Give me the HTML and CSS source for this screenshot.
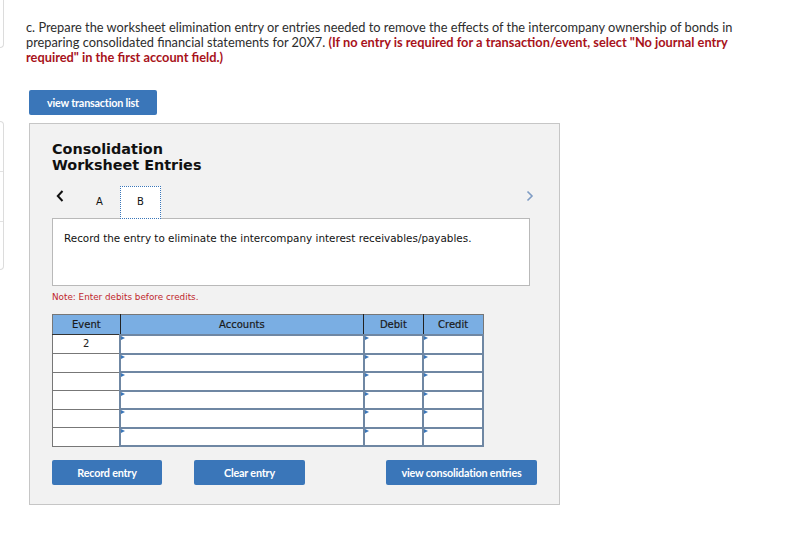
FILE: index.html
```html
<!DOCTYPE html>
<html>
<head>
<meta charset="utf-8">
<link rel="stylesheet" href="styles.css">
</head>
<body>
<div class="page">
  <aside class="side">
    <div class="side-box side-top"></div>
    <div class="side-box side-list">
      <div class="side-item"></div>
      <div class="side-item"></div>
      <div class="side-item"></div>
    </div>
  </aside>
  <main class="main">
    <p class="question">c. Prepare the worksheet elimination entry or entries needed to remove the effects of the intercompany ownership of bonds in<br>preparing consolidated financial statements for 20X7. <strong class="warn">(If no entry is required for a transaction/event, select "No journal entry<br>required" in the first account field.)</strong></p>
    <button class="btn btn-list">view transaction list</button>
    <section class="panel">
      <h2 class="panel-title">Consolidation<br>Worksheet Entries</h2>
      <div class="tabs">
        <span class="arrow arrow-left">
          <svg width="8" height="12" viewBox="0 0 8 12"><path d="M6.5 1 L1.8 6 L6.5 11" fill="none" stroke="#111" stroke-width="2"/></svg>
        </span>
        <span class="tab">A</span>
        <span class="tab tab-active">B</span>
        <span class="arrow arrow-right">
          <svg width="8" height="12" viewBox="0 0 8 12"><path d="M1.5 1.5 L6 6 L1.5 10.5" fill="none" stroke="#7f9cc4" stroke-width="1.6"/></svg>
        </span>
      </div>
      <div class="instruction">Record the entry to eliminate the intercompany interest receivables/payables.</div>
      <p class="note">Note: Enter debits before credits.</p>
      <table class="grid">
        <thead>
          <tr>
            <th class="c-event">Event</th>
            <th class="c-acct">Accounts</th>
            <th class="c-num">Debit</th>
            <th class="c-num">Credit</th>
          </tr>
        </thead>
        <tbody>
          <tr><td class="ev">2</td><td class="in"><div class="field"></div></td><td class="in"><div class="field"></div></td><td class="in"><div class="field"></div></td></tr>
          <tr><td class="ev"></td><td class="in"><div class="field"></div></td><td class="in"><div class="field"></div></td><td class="in"><div class="field"></div></td></tr>
          <tr><td class="ev"></td><td class="in"><div class="field"></div></td><td class="in"><div class="field"></div></td><td class="in"><div class="field"></div></td></tr>
          <tr><td class="ev"></td><td class="in"><div class="field"></div></td><td class="in"><div class="field"></div></td><td class="in"><div class="field"></div></td></tr>
          <tr><td class="ev"></td><td class="in"><div class="field"></div></td><td class="in"><div class="field"></div></td><td class="in"><div class="field"></div></td></tr>
          <tr><td class="ev"></td><td class="in"><div class="field"></div></td><td class="in"><div class="field"></div></td><td class="in"><div class="field"></div></td></tr>
        </tbody>
      </table>
      <div class="actions">
        <button class="btn btn-record">Record entry</button>
        <button class="btn btn-clear">Clear entry</button>
        <button class="btn btn-view">view consolidation entries</button>
      </div>
    </section>
  </main>
</div>
</body>
</html>
```
FILE: styles.css
```css
html, body {
  margin: 0;
  padding: 0;
  background: #fff;
}

.page {
  display: flex;
  align-items: flex-start;
  width: 801px;
  height: 534px;
  overflow: hidden;
}

.side {
  width: 4px;
  flex: none;
  display: flex;
  flex-direction: column;
}

.side-box {
  border: 1px solid #dcdcdc;
  border-left: none;
  border-radius: 0 0 4px 0;
}

.side-top {
  height: 47px;
  border-top: none;
}

.side-list {
  margin-top: 73px;
  border-radius: 0 4px 4px 0;
}

.side-item {
  height: 49px;
  border-bottom: 1px solid #e2e2e2;
}

.side-item:last-child {
  border-bottom: none;
  height: 47px;
}

.main {
  padding-left: 25px;
  flex: 1;
}

.question {
  margin: 20px 0 0 -3px;
  font-family: Lato, "Liberation Sans", sans-serif;
  font-size: 12.8px;
  line-height: 15px;
  color: #2d2d2d;
  white-space: nowrap;
}

.warn {
  color: #a8121b;
  font-weight: 700;
}

.btn {
  display: block;
  border: none;
  border-radius: 2px;
  background: #3a76b9;
  color: #fff;
  font-family: Lato, "Liberation Sans", sans-serif;
  font-weight: 700;
  font-size: 10.8px;
  letter-spacing: -0.2px;
  height: 25px;
  padding: 0;
  cursor: pointer;
}

.btn-list {
  margin-top: 25px;
  width: 128px;
}

.panel {
  margin-top: 8px;
  width: 507px;
  height: 363px;
  padding: 17px 0 0 22px;
  background: #f2f2f2;
  border: 1px solid #c6c6c6;
}

.panel-title {
  margin: 0;
  font-family: "DejaVu Sans", Verdana, sans-serif;
  font-weight: 700;
  font-size: 14.4px;
  line-height: 16px;
  color: #111;
}

.tabs {
  margin-top: 12px;
  display: flex;
  align-items: flex-end;
  height: 33px;
  width: 482px;
}

.arrow {
  display: flex;
  align-items: center;
  height: 33px;
}

.arrow-left {
  width: 23px;
  padding-left: 4px;
  margin-bottom: 6px;
}

.arrow-right {
  margin-left: auto;
  margin-bottom: 6px;
}

.tab {
  width: 41px;
  height: 31px;
  display: flex;
  align-items: center;
  justify-content: center;
  font-family: "DejaVu Sans", Verdana, sans-serif;
  font-size: 10px;
  color: #111;
  padding-bottom: 3px;
  box-sizing: border-box;
}

.tab-active {
  background: #fff;
  border: 1px dotted #3a76b9;
  height: 33px;
  position: relative;
  z-index: 1;
  margin-bottom: -1px;
}

.instruction {
  width: 465px;
  height: 54px;
  padding: 12px 0 0 11px;
  background: #fff;
  border: 1px solid #b9b9b9;
  font-family: "DejaVu Sans", Verdana, sans-serif;
  font-size: 10.4px;
  line-height: 14px;
  color: #111;
}

.note {
  margin: 5px 0 0;
  font-family: "DejaVu Sans", Verdana, sans-serif;
  font-size: 8.8px;
  line-height: 12px;
  color: #c0272d;
}

.grid {
  margin-top: 11px;
  border-collapse: collapse;
  width: 432px;
  background: #fff;
  border: 1px solid #777;
  font-family: "DejaVu Sans", Verdana, sans-serif;
}

.grid thead tr {
  height: 20px;
}

.grid tbody tr {
  height: 18.5px;
}

.grid th {
  background: #7aaee3;
  padding: 0;
  font-size: 10px;
  font-weight: 400;
  color: #1a1a1a;
  -webkit-text-stroke: 0.2px #1a1a1a;
  border-right: 1px solid #222;
  border-bottom: 1px solid #333;
  text-align: center;
}

.grid th:last-child {
  border-right: 1px solid #777;
}

.c-event { width: 67px; }
.c-acct { width: 244px; }
.c-num { width: 59px; }

.grid td {
  padding: 0;
  border: 1px solid #777;
  vertical-align: top;
}

.grid td.ev {
  text-align: center;
  font-size: 10px;
  color: #222;
  line-height: 18px;
  border-right: 1px solid #333;
}

.grid td.in {
  border: 2px solid #6f87a3;
}

.field {
  position: relative;
  height: 0;
}

.field::before {
  content: "";
  position: absolute;
  left: 0;
  top: 0;
  border-left: 4px solid #3a76b9;
  border-top: 2.5px solid transparent;
  border-bottom: 2.5px solid transparent;
}

.actions {
  margin-top: 13px;
  display: flex;
}

.btn-record {
  width: 110px;
}

.btn-clear {
  margin-left: 32px;
  width: 111px;
}

.btn-view {
  margin-left: 81px;
  width: 151px;
}
```
